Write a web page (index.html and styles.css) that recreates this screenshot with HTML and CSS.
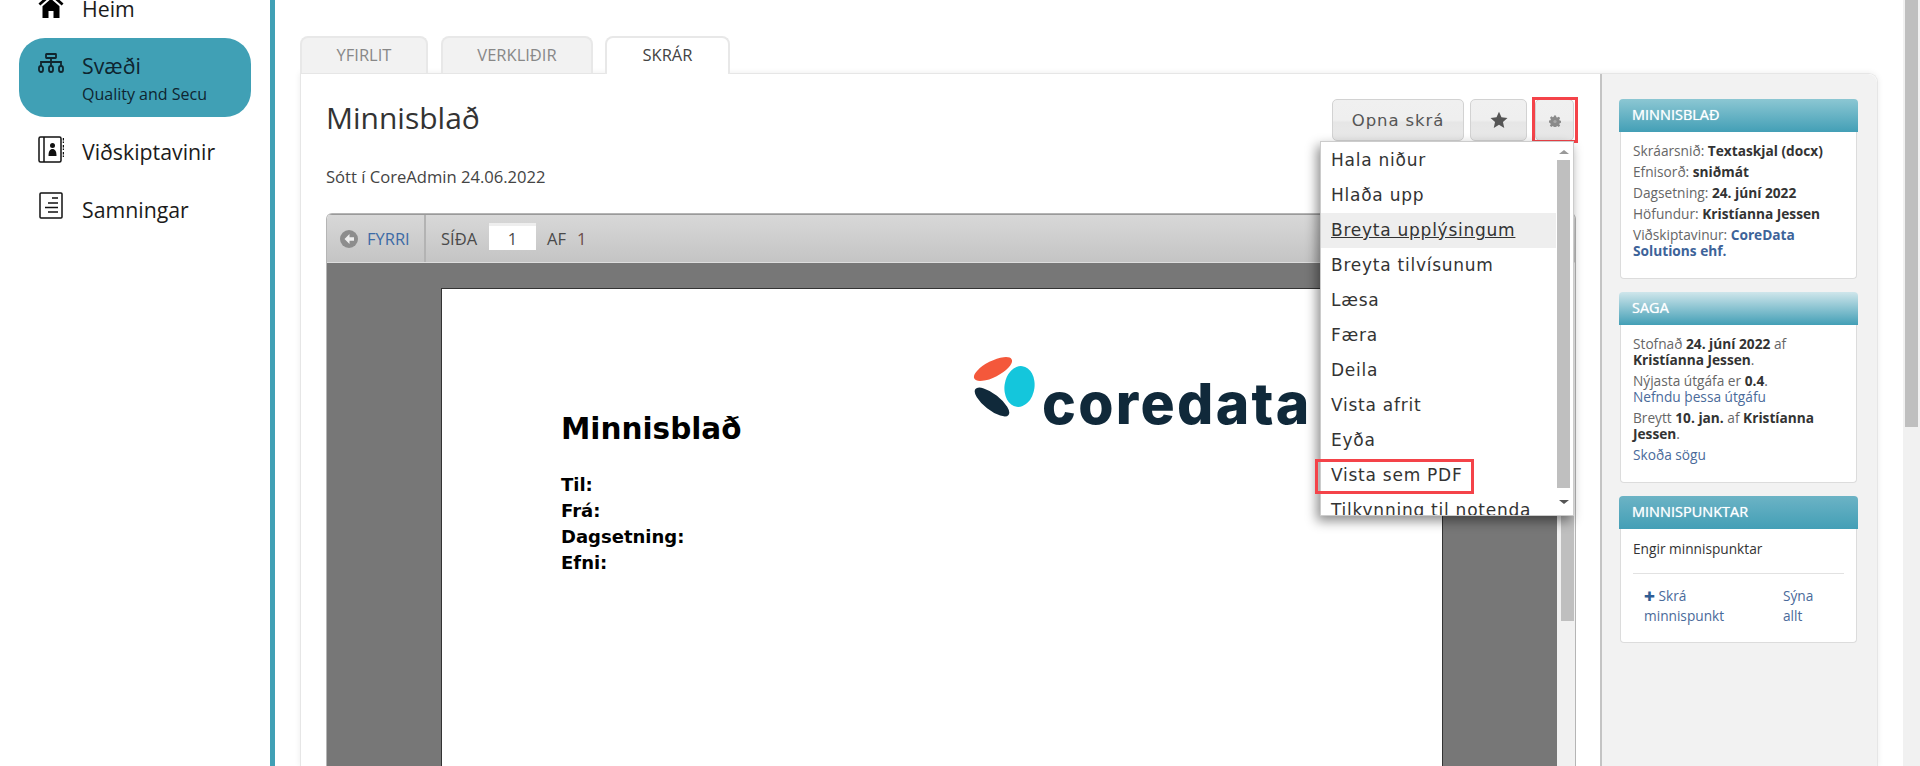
FILE: index.html
```html
<!DOCTYPE html>
<html lang="is">
<head>
<meta charset="utf-8">
<title>Minnisblað</title>
<link rel="stylesheet" href="styles.css">
</head>
<body>
<div class="app">
  <aside class="sidebar">
    <nav class="nav">
      <a class="nav-item nav-home">
        <svg class="nav-icon" viewBox="0 0 26 26"><path d="M13 0.5 0.5 11.5l1.8 2L13 4.2l10.7 9.3 1.8-2L20.5 7V1.5h-3.5v2.4z" fill="#000"/><path d="M4.5 14.2 13 6.8l8.5 7.4V26H15.5v-7h-5v7H4.5z" fill="#000"/></svg>
        <span class="nav-label">Heim</span>
      </a>
      <a class="nav-item nav-active">
        <svg class="nav-icon icon-map" viewBox="0 0 26 20" fill="none" stroke="#10252e" stroke-width="1.8"><rect x="8" y="1" width="10" height="4" rx="0.5"/><path d="M13 5v4M3 13V9h20v4M13 9v4"/><rect x="1" y="13" width="4" height="6" rx="2"/><rect x="11" y="13" width="4" height="6" rx="2"/><rect x="21" y="13" width="4" height="6" rx="2"/></svg>
        <span class="nav-text"><span class="nav-label">Svæði</span><span class="nav-sub">Quality and Secu</span></span>
      </a>
      <a class="nav-item nav-customers">
        <svg class="nav-icon" viewBox="0 0 26 27" fill="none" stroke="#111" stroke-width="1.5"><rect x="1" y="1" width="22" height="25" rx="1.5"/><path d="M6 1v25"/><path d="M25.5 2v5M25.5 9v5M25.5 16v5" stroke-dasharray="2.4 1"/><circle cx="14.500" cy="9.500" r="2.500" fill="#111" stroke="none"/><path d="M10.500 20c0-5 1.500-7 4-7s4 2 4 7z" fill="#111" stroke="none"/></svg>
        <span class="nav-label">Viðskiptavinir</span>
      </a>
      <a class="nav-item nav-contracts">
        <svg class="nav-icon" viewBox="0 0 26 27" fill="none" stroke="#111" stroke-width="1.500"><rect x="2" y="1" width="22" height="25" rx="1"/><path d="M14 6h6M10 11h10M7 15.500h13M10 20h10"/></svg>
        <span class="nav-label">Samningar</span>
      </a>
    </nav>
  </aside>

  <main class="main">
    <div class="tabs">
      <a class="tab tab-overview">Yfirlit</a>
      <a class="tab tab-tasks">Verkliðir</a>
      <a class="tab tab-files tab-current">Skrár</a>
    </div>
    <section class="panel">
      <div class="content">
        <header class="doc-head">
          <h1 class="doc-title">Minnisblað</h1>
          <div class="actions">
            <button class="btn btn-open">Opna skrá</button>
            <button class="btn btn-star"><svg viewBox="0 0 24 24" class="star"><path d="M12 1l3.300 7.400 8 .8-6 5.400 1.700 7.900L12 18.400 5 22.500l1.700-7.900-6-5.400 8-.8z" fill="#555"/></svg></button>
            <button class="btn btn-gear"><svg viewBox="0 0 24 24" class="gear"><path d="M10 1h4l.7 3.300 2 .8L19.500 3.300l2.800 2.800-1.800 2.800.8 2 3.300.7v4l-3.300.7-.8 2 1.800 2.800-2.800 2.800-2.800-1.800-2 .8-.7 3.300h-4l-.7-3.300-2-.8-2.800 1.800-2.800-2.800 1.800-2.800-.8-2L-.3 15v-4l3.300-.7.8-2L2 5.500 4.800 2.700 7.500 4.500l2-.8z" fill="#8a8a8a" fill-rule="evenodd"/><circle cx="12" cy="13" r="3.200" fill="#a8a8a8"/></svg><span class="mark mark-gear"></span></button>
            <div class="menu-wrap">
              <div class="menu">
                <ul class="menu-list">
                  <li class="menu-item">Hala niður</li>
                  <li class="menu-item">Hlaða upp</li>
                  <li class="menu-item menu-item-hover">Breyta upplýsingum</li>
                  <li class="menu-item">Breyta tilvísunum</li>
                  <li class="menu-item">Læsa</li>
                  <li class="menu-item">Færa</li>
                  <li class="menu-item">Deila</li>
                  <li class="menu-item">Vista afrit</li>
                  <li class="menu-item">Eyða</li>
                  <li class="menu-item">Vista sem PDF</li>
                  <li class="menu-item">Tilkynning til notenda</li>
                </ul>
                <div class="menu-scroll">
                  <span class="arrow-up"></span>
                  <span class="menu-thumb"></span>
                  <span class="arrow-down"></span>
                </div>
              </div>
              <span class="mark mark-pdf"></span>
            </div>
          </div>
        </header>
        <p class="doc-note">Sótt í CoreAdmin 24.06.2022</p>

        <div class="viewer">
          <div class="viewer-bar">
            <a class="prev">
              <svg class="prev-icon" viewBox="0 0 18 18"><circle cx="9" cy="9" r="9" fill="#8d8d8d"/><path d="M9.500 4 4.500 9l5 5v-3.200h4.500V7.200H9.500z" fill="#eee"/></svg>
              <span class="prev-label">Fyrri</span>
            </a>
            <div class="pager">
              <span>SÍÐA</span>
              <span class="page-input">1</span>
              <span>AF</span>
              <span class="page-total">1</span>
            </div>
          </div>
          <div class="viewer-body">
            <div class="stage">
              <div class="page">
                <div class="logo">
                  <svg class="logo-mark" viewBox="0 0 62 60"><ellipse cx="20" cy="12" rx="21" ry="8" transform="rotate(-27 20 12)" fill="#f4583b"/><ellipse cx="46.500" cy="29.500" rx="15" ry="20.500" transform="rotate(8 46.500 29.500)" fill="#14c6dc"/><ellipse cx="19" cy="45" rx="21" ry="8" transform="rotate(38 19 45)" fill="#10293a"/></svg>
                  <span class="logo-text">coredata</span>
                </div>
                <h2 class="page-title">Minnisblað</h2>
                <p class="page-line">Til:</p>
                <p class="page-line">Frá:</p>
                <p class="page-line">Dagsetning:</p>
                <p class="page-line">Efni:</p>
              </div>
            </div>
            <div class="viewer-scroll"><span class="viewer-thumb"></span></div>
          </div>
        </div>
      </div>

      <div class="rail">
        <article class="box">
          <h3 class="box-head head-a">Minnisblað</h3>
          <div class="box-body">
            <p class="row">Skráarsnið: <b>Textaskjal (docx)</b></p>
            <p class="row">Efnisorð: <b>sniðmát</b></p>
            <p class="row">Dagsetning: <b>24. júní 2022</b></p>
            <p class="row">Höfundur: <b>Kristíanna Jessen</b></p>
            <p class="row">Viðskiptavinur: <a class="link-b">CoreData Solutions ehf.</a></p>
          </div>
        </article>
        <article class="box">
          <h3 class="box-head head-b">Saga</h3>
          <div class="box-body">
            <p class="row">Stofnað <b>24. júní 2022</b> af <b>Kristíanna Jessen</b>.</p>
            <p class="row">Nýjasta útgáfa er <b>0.4</b>.<br><a class="link">Nefndu þessa útgáfu</a></p>
            <p class="row">Breytt <b>10. jan.</b> af <b>Kristíanna Jessen</b>.</p>
            <p class="row"><a class="link">Skoða sögu</a></p>
          </div>
        </article>
        <article class="box">
          <h3 class="box-head head-c">Minnispunktar</h3>
          <div class="box-body notes">
            <p class="notes-empty">Engir minnispunktar</p>
            <div class="notes-links">
              <a class="link note-add"><span class="plus">✚</span> Skrá minnispunkt</a>
              <a class="link note-all">Sýna allt</a>
            </div>
          </div>
        </article>
      </div>
    </section>
  </main>

  <div class="page-scroll"><span class="page-thumb"></span></div>
</div>
</body>
</html>
```

FILE: styles.css
```css
* { box-sizing: border-box; }
html, body { margin: 0; padding: 0; height: 766px; overflow: hidden; background: #fff; }
body { font-family: "Open Sans", sans-serif; color: #333; }
h1, h2, h3, p, ul { margin: 0; padding: 0; }

.app { display: flex; height: 766px; overflow: hidden; }

/* Sidebar */
.sidebar { flex: 0 0 275px; border-right: 5px solid #40a0b5; padding-right: 19px; padding-left: 19px; }
.nav { display: flex; flex-direction: column; margin-top: -8px; }
.nav-item { display: flex; align-items: flex-start; gap: 18px; padding: 0 19px; color: #1b1b1b; }
.nav-icon { flex: 0 0 26px; width: 26px; height: 27px; }
.nav-label { display: block; font-size: 21.3px; line-height: 27px; }
.nav-home { padding-bottom: 16px; }
.nav-home .nav-icon { height: 26px; }
.nav-home .nav-label { margin-top: 3px; }
.nav-active { background: #40a0b5; border-radius: 26px; padding-top: 15px; height: 79px; color: #0e2530; }
.nav-active .icon-map { height: 20px; }
.nav-active .nav-text { margin-top: -1px; }
.nav-sub { display: block; font-size: 16px; line-height: 20px; margin-top: 5px; white-space: nowrap; }
.nav-customers { padding-top: 19px; padding-bottom: 9px; }
.nav-customers .nav-label { margin-top: 2px; }
.nav-contracts { padding-top: 18px; }
.nav-contracts .nav-label { margin-top: 4px; }

/* Main */
.main { flex: 1; min-width: 0; padding: 36px 25px 0; display: flex; flex-direction: column; overflow: hidden; }
.tabs { display: flex; height: 37px; flex: 0 0 37px; position: relative; z-index: 1; }
.tab { display: block; height: 37px; border: 2px solid #e8e8e8; border-bottom: 0; border-radius: 8px 8px 0 0; background: #f2f2f2; color: #888; font-size: 16.5px; line-height: 33px; text-align: center; text-transform: uppercase; }
.tab-overview { width: 128px; margin-right: 13px; }
.tab-tasks { width: 152px; margin-right: 12px; }
.tab-files { width: 125px; }
.tab-current { background: #fff; color: #444; height: 38px; }

.panel { flex: 1; display: flex; min-height: 0; border: 1px solid #e6e6e6; border-bottom: 0; border-radius: 0 9px 0 0; box-shadow: 0 0 6px rgba(0,0,0,.08); overflow: visible; }
.content { flex: 1; min-width: 0; padding: 25px 24px 0 25px; background: #fff; overflow: hidden; }

.doc-head { display: flex; justify-content: space-between; height: 42px; }
.doc-title { font-size: 30px; font-weight: 400; line-height: 38px; color: #333; }
.actions { position: relative; display: flex; gap: 6px; padding-right: 2px; }
.btn { position: relative; height: 42px; padding: 0; border: 1px solid #d2d2d2; border-radius: 5px; background: linear-gradient(#f0f0f0 0, #efefef 50%, #e6e6e6 56%, #e9e9e9 100%); color: #555; font-family: "DejaVu Sans", sans-serif; font-size: 16.500px; letter-spacing: .9px; }
.btn-open { width: 132px; }
.btn-star { width: 57px; }
.btn-gear { width: 39px; margin-left: 2px; }
.star { display: block; width: 18px; height: 18px; margin: 0 auto; }
.gear { display: block; width: 12px; height: 12px; margin: 2px auto 0; }
.mark { position: absolute; border: 3px solid #f44349; }
.mark-gear { left: -4px; right: -5px; top: -3px; bottom: -3px; }
.mark-pdf { left: -5px; top: 318px; width: 159px; height: 35px; }

.menu-wrap { position: absolute; top: 100%; right: 2px; width: 254px; height: 375px; z-index: 5; }
.menu { display: flex; height: 100%; background: #fff; border: 1px solid #ccc; overflow: hidden; box-shadow: -3px 5px 11px rgba(0,0,0,.45); }
.menu-list { flex: 1; list-style: none; min-width: 0; overflow: hidden; padding-top: 1px; }
.menu-item { height: 35px; padding-left: 10px; font-family: "DejaVu Sans", sans-serif; font-size: 17px; letter-spacing: .75px; line-height: 35px; color: #333; white-space: nowrap; }
.menu-item-hover { background: #eee; text-decoration: underline; }
.menu-scroll { flex: 0 0 17px; display: flex; flex-direction: column; align-items: center; padding: 8px 2px 7px 0; background: #fff; }
.menu-thumb { width: 13px; height: 328px; margin-top: 6px; background: #bfbfbf; }
.arrow-up, .arrow-down { width: 0; height: 0; border-left: 5px solid transparent; border-right: 5px solid transparent; }
.arrow-up { border-bottom: 4px solid #999; }
.arrow-down { border-top: 4px solid #555; margin-top: auto; margin-bottom: 4px; }

.doc-note { margin-top: 26px; font-size: 16.600px; line-height: 20px; color: #444; }

/* Viewer */
.viewer { margin-top: 26px; border: 1px solid #b5b5b5; border-bottom: 0; border-radius: 6px 6px 0 0; overflow: hidden; }
.viewer-bar { display: flex; height: 49px; background: linear-gradient(#d8d8d8, #c4c4c4); border-top: 1px solid #9a9a9a; border-bottom: 1px solid #ddd; }
.prev { display: flex; align-items: center; gap: 9px; width: 99px; padding-left: 13px; border-right: 2px solid #b3b3b3; }
.prev-icon { width: 18px; height: 18px; flex: 0 0 18px; }
.prev-label { color: #3d6ba6; font-size: 16.500px; text-transform: uppercase; }
.pager { display: flex; align-items: center; gap: 11px; padding-left: 15px; font-size: 16.500px; color: #4a4a4a; }
.page-input { width: 47px; height: 27px; margin: -4px 0 0 1px; background: #fff; text-align: center; line-height: 25px; border-top: 3px solid #eee; }
.page-total { color: #6b4a4a; }

.viewer-body { display: flex; height: 520px; }
.stage { flex: 1; min-width: 0; background: #777; padding: 25px 0 0 114px; overflow: hidden; }
.page { position: relative; width: 1002px; height: 900px; background: #fff; border: 1px solid #333; border-bottom: 0; padding-top: 120px; padding-left: 119px; font-family: "DejaVu Sans", sans-serif; color: #000; }
.page-title { font-size: 29.500px; font-weight: 700; line-height: 40px; margin-bottom: 23px; }
.page-line { font-size: 18px; font-weight: 700; line-height: 26px; }
.logo { position: absolute; left: 531px; top: 68px; display: flex; align-items: flex-start; filter: blur(.4px); }
.logo-mark { display: block; flex: 0 0 62px; width: 62px; height: 60px; }
.logo-text { font-family: Inter, sans-serif; font-weight: 800; font-size: 57px; letter-spacing: 2.300px; line-height: 60px; color: #10293a; margin: 17px 0 0 7px; }
.viewer-scroll { flex: 0 0 18px; background: #f1f1f1; padding: 0 1px 0 4px; }
.viewer-thumb { display: block; width: 13px; height: 358px; background: #bfbfbf; }

/* Right rail */
.rail { flex: 0 0 277px; background: #f2f2f2; border-left: 2px solid #c4c4c4; padding: 25px 19px 0 17px; border-radius: 0 9px 0 0; display: flex; flex-direction: column; gap: 13px; }
.box { display: block; }
.box-head { height: 33px; padding-left: 13px; border-radius: 4px 4px 0 0; font-size: 14.500px; font-weight: 400; line-height: 31px; text-transform: uppercase; color: #fff; text-shadow: 0 0 1px rgba(255,255,255,.8); }
.head-a { background: linear-gradient(#8cc7d3, #439fb6); }
.head-b { background: linear-gradient(#cfe6eb, #439fb6); }
.head-c { background: linear-gradient(#6cb3c5, #439fb6); }
.box-body { padding: 11px 12px 14px 12px; margin: 0 1px; background: #fff; border: 1px solid #dcdcdc; border-top: 0; border-radius: 0 0 4px 4px; font-size: 13.700px; line-height: 16px; color: #666; }
.row { margin-bottom: 5px; }
.row b { color: #333; font-weight: 700; }
.link-b { color: #3d6399; font-weight: 700; }
.link { color: #4a6a9a; }
.notes { padding-bottom: 12px; height: 114px; }
.notes-empty { color: #333; line-height: 20px; margin-top: -1px; padding-bottom: 14px; border-bottom: 1px solid #e2e2e2; }
.notes-links { display: flex; padding: 12px 0 0 11px; line-height: 20px; }
.note-add { width: 100px; margin-right: 39px; }
.note-all { width: 40px; }
.plus { color: #2f5d94; font-size: 13px; }

/* Page scrollbar */
.page-scroll { flex: 0 0 17px; background: #f1f1f1; padding: 0 2px; }
.page-thumb { display: block; width: 13px; height: 427px; background: #bfbfbf; }
```
